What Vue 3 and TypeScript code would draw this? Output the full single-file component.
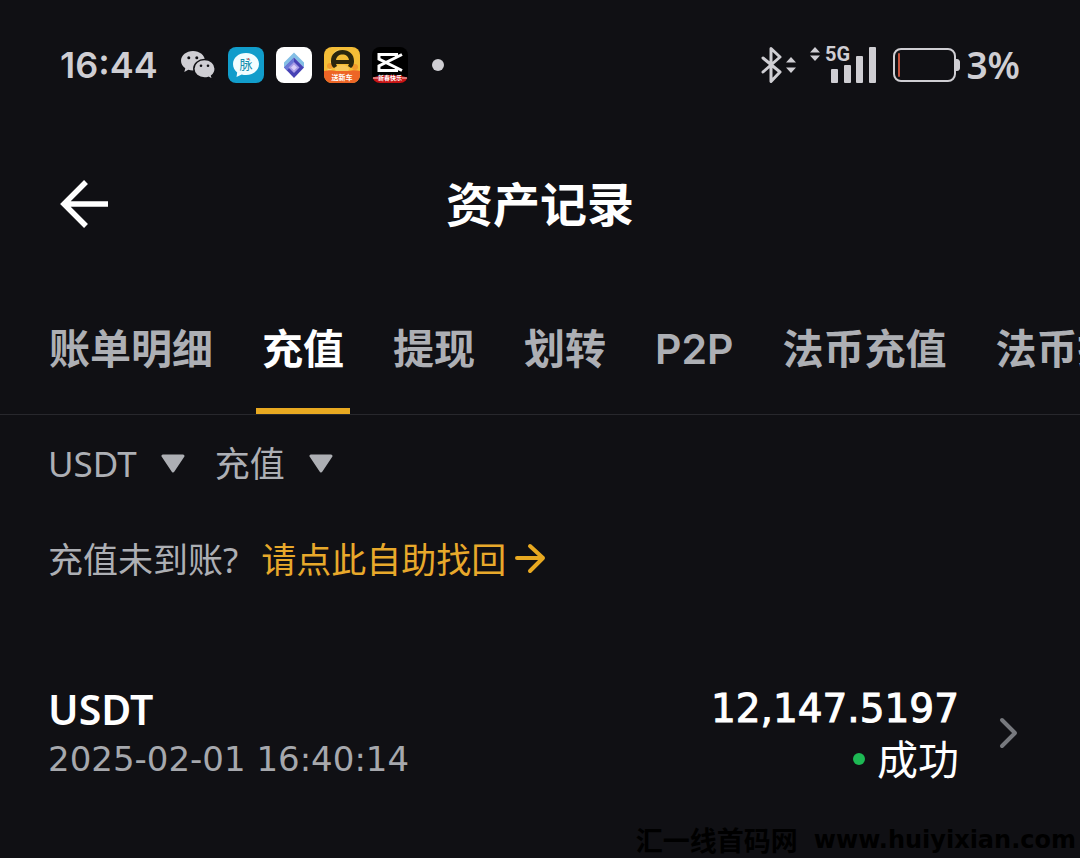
<script setup lang="ts">
import { ref } from 'vue'

interface DepositRecord {
  coin: string
  time: string
  amount: string
  status: string
}

const tabs: string[] = ['账单明细', '充值', '提现', '划转', 'P2P', '法币充值', '法币提现']
const activeTab = ref<string>('充值')
const coin = ref<string>('USDT')
const kind = ref<string>('充值')

const records: DepositRecord[] = [
  { coin: 'USDT', time: '2025-02-01 16:40:14', amount: '12,147.5197', status: '成功' },
]
</script>

<template>
  <div class="screen">
    <div class="status-bar">
      <span class="clock">16:44</span>
      <div class="notifications">
        <svg class="app-icon" viewBox="0 0 36 36" aria-hidden="true">
          <path fill="#cfced3" d="M13 4C6.400 4 1 8.300 1 13.800c0 3.100 1.700 5.700 4.300 7.500L4.300 25l4-2.200c1.500.5 3.100.8 4.700.8 6.600 0 12-4.300 12-9.800S19.600 4 13 4z" />
          <path fill="#cfced3" stroke="#101014" stroke-width="1.500" d="M24.500 12.600c-6 0-10.700 4-10.700 9.200s4.700 9.200 10.700 9.200c1.400 0 2.800-.2 4-.6l4.200 2.200-1.100-3.700c2.200-1.700 3.600-4.200 3.600-7.100 0-5.200-4.700-9.200-10.700-9.200z" />
          <g fill="#101014">
            <circle cx="8.800" cy="10.800" r="1.500" /><circle cx="16.800" cy="10.800" r="1.500" />
            <circle cx="21" cy="18.800" r="1.300" /><circle cx="28" cy="18.800" r="1.300" />
          </g>
        </svg>
        <svg class="app-icon" viewBox="0 0 36 36" aria-hidden="true">
          <rect width="36" height="36" rx="8" fill="#119dcb" />
          <path fill="#f2fdff" d="M18 6C10.500 6 5 10.800 5 17c0 3.500 1.600 6.500 4.200 8.500L8.500 30l5.200-2.500c1.400.4 2.800.5 4.300.5 7.500 0 13-4.800 13-11S25.500 6 18 6z" />
          <text x="18" y="22" text-anchor="middle" font-size="13" fill="#168fae">脉</text>
          <circle cx="20.500" cy="12" r="1" fill="#d8605a" />
        </svg>
        <svg class="app-icon" viewBox="0 0 36 36" aria-hidden="true">
          <rect width="36" height="36" rx="8" fill="#fff" />
          <path fill="#84bfe5" d="M18 5.500 28 15.500v5L18 10.500 8 20.500v-5z" />
          <path fill="#4742b5" d="M18 10.500 28 20.500 18 31 8 20.500z" />
          <path fill="#6a78d6" d="M18 10.500 8 20.500l3 3 7-8z" />
          <path fill="#a79be6" d="m18 15 5.500 5.500L18 26l-5.500-5.500z" />
          <path fill="#d9cff7" d="m18 17.500 3 3-3 3-3-3z" />
        </svg>
        <svg class="app-icon" viewBox="0 0 36 36" aria-hidden="true">
          <rect width="36" height="36" rx="8" fill="#f4bd37" />
          <path fill="#f8d568" d="M3 24 10 5l5-3-8 22z" />
          <circle cx="6" cy="19" r="3" fill="#f19a2b" /><circle cx="31" cy="20" r="3" fill="#f19a2b" />
          <ellipse cx="18" cy="22" rx="7" ry="4" fill="#f7c95a" />
          <path fill="#ed6526" d="M0 24c5-1 8-1 12 0h12c5-1 8-1 12 0v4a8 8 0 0 1-8 8H8a8 8 0 0 1-8-8z" />
          <path fill="#2a260e" d="M10 21C7 19 7 15 7 14 7 7 12 3 18.500 3S30 7 30 14c0 1 0 5-3 7l-3-2 1-2H12l1 2zM12 13h13c-.5-3.500-3-5.500-6.500-5.500S12.500 9.500 12 13z" fill-rule="evenodd" />
          <text x="18" y="33" text-anchor="middle" font-size="7" font-weight="700" fill="#fff">送新车</text>
        </svg>
        <svg class="app-icon" viewBox="0 0 36 36" aria-hidden="true">
          <defs><clipPath id="tile"><rect width="36" height="36" rx="8" /></clipPath></defs>
          <g clip-path="url(#tile)">
            <rect width="36" height="36" fill="#000" />
            <path fill="#c81516" d="M0 31c8-4 28-4 36 0v5H0z" />
            <path fill="none" stroke="#fff" stroke-width="3" d="M30 7.500 7 19v4.500h17.500V21M24.500 10V7.500H7V12l23 11.500" />
            <path stroke="#f5d6d0" stroke-width="1" d="M1 31h5M30 31h5" />
            <text x="18" y="33" text-anchor="middle" font-size="6" font-weight="700" fill="#fff">新春快乐</text>
          </g>
        </svg>
        <span class="more-dot"></span>
      </div>
      <div class="system">
        <svg class="bluetooth" viewBox="0 0 38 38" aria-hidden="true">
          <path fill="none" stroke="#cfced3" stroke-width="3" stroke-linejoin="round" stroke-linecap="round" d="m3 12 17 14-9 9.500v-33L20 11 3 26" />
          <path fill="#cfced3" d="m31 11 5 5.500H26zM31 27l5-5.500H26z" />
        </svg>
        <svg class="signal" viewBox="0 0 68 38" aria-hidden="true">
          <path fill="#cfced3" d="m5 1 5 5.500H0zM5 15l5-5.500H0z" />
          <text x="15" y="15" class="network">5G</text>
          <g fill="#cfced3">
            <rect x="21" y="23" width="7" height="14" rx="1" /><rect x="34" y="19" width="7" height="18" rx="1" />
            <rect x="46" y="10" width="7" height="27" rx="1" /><rect x="59" y="1" width="7" height="36" rx="1" />
          </g>
        </svg>
        <svg class="battery" viewBox="0 0 67 36" aria-hidden="true">
          <rect x="1" y="2" width="61" height="32" rx="7" fill="none" stroke="#cfced3" stroke-width="2" />
          <path fill="#cfced3" d="M62 12h2c2 0 3 2 3 3v6c0 1-1 3-3 3h-2z" />
          <rect x="5" y="6" width="2" height="24" rx="1" fill="#c4523d" />
        </svg>
        <span class="percent">3%</span>
      </div>
    </div>

    <header class="title-bar">
      <button class="back" type="button" aria-label="返回">
        <svg viewBox="0 0 50 50" aria-hidden="true">
          <path fill="none" stroke="#fff" stroke-width="5.500" d="M49 25H5M27 3 5 25l22 22" />
        </svg>
      </button>
      <h1>资产记录</h1>
    </header>

    <nav class="tabs" role="tablist">
      <button
        v-for="tab in tabs"
        :key="tab"
        type="button"
        role="tab"
        class="tab"
        :class="{ active: tab === activeTab }"
        :aria-selected="tab === activeTab"
        @click="activeTab = tab"
      >{{ tab }}</button>
    </nav>

    <main>
      <div class="filters">
        <label class="filter">
          <select v-model="coin" aria-label="币种">
            <option>USDT</option>
          </select>
          <svg viewBox="0 0 24 20" aria-hidden="true"><path d="M2 2h20L12 17z" /></svg>
        </label>
        <label class="filter">
          <select v-model="kind" aria-label="类型">
            <option>充值</option>
          </select>
          <svg viewBox="0 0 24 20" aria-hidden="true"><path d="M2 2h20L12 17z" /></svg>
        </label>
      </div>

      <p class="help">
        <span>充值未到账?</span>
        <a href="#recover">请点此自助找回<svg viewBox="0 0 30 30" aria-hidden="true">
          <path d="M2 13h26M15 1l13 12-13 13" />
        </svg></a>
      </p>

      <ul class="records">
        <li v-for="record in records" :key="record.time">
          <a class="record" href="#record">
            <span class="left">
              <strong class="coin">{{ record.coin }}</strong>
              <time class="time">{{ record.time }}</time>
            </span>
            <span class="right">
              <span class="amount">{{ record.amount }}</span>
              <span class="state">{{ record.status }}</span>
            </span>
            <svg class="chevron" viewBox="0 0 18 30" aria-hidden="true"><path d="m2 1 13 13L2 27" /></svg>
          </a>
        </li>
      </ul>
    </main>

    <div class="watermark"><span>汇一线首码网</span><span>www.huiyixian.com</span></div>
  </div>
</template>

<style>
body {
  background: #101014;
}
</style>

<style scoped>
.screen {
  position: relative;
  box-sizing: border-box;
  min-height: 100vh;
  overflow: hidden;
  background: #101014;
  color: #fff;
  font-family: 'Noto Sans', 'Noto Sans CJK SC', sans-serif;
}
svg {
  display: block;
  flex: none;
}
button,
select {
  margin: 0;
  padding: 0;
  border: 0;
  background: none;
  color: inherit;
  font: inherit;
}
a {
  color: inherit;
  text-decoration: none;
}
.status-bar {
  display: flex;
  align-items: center;
  height: 130px;
  padding: 0 60px;
  color: #cfced3;
}
.clock {
  font: 600 36px/48px Inter, sans-serif;
}
.percent {
  font: 600 37px/48px 'Noto Sans', sans-serif;
}
.notifications {
  display: flex;
  align-items: center;
  gap: 12px;
  margin-left: 22px;
}
.app-icon {
  width: 36px;
  height: 36px;
}
.more-dot {
  width: 12px;
  height: 12px;
  margin-left: 12px;
  border-radius: 50%;
  background: #cfced3;
}
.system {
  display: flex;
  align-items: center;
  margin-left: auto;
}
.bluetooth {
  width: 38px;
  height: 38px;
}
.signal {
  width: 68px;
  height: 38px;
  margin-left: 12px;
  overflow: visible;
}
.network {
  fill: #cfced3;
  font: 700 20px Roboto, sans-serif;
}
.battery {
  width: 67px;
  height: 36px;
  margin: 0 6px 0 15px;
}
.title-bar {
  display: grid;
  grid-template-columns: 50px 1fr 50px;
  align-items: center;
  height: 148px;
  padding: 0 59px;
}
.back svg {
  width: 50px;
  height: 50px;
}
h1 {
  margin: 0;
  padding-bottom: 4px;
  font: 700 47px/68px 'Noto Sans CJK SC', sans-serif;
  text-align: center;
}
.tabs {
  display: flex;
  gap: 37px;
  height: 136px;
  padding-left: 43px;
  overflow: hidden;
  border-bottom: 1px solid #28282d;
}
.tab {
  flex: none;
  box-sizing: border-box;
  height: 136px;
  padding: 12px 6px 0;
  border-bottom: 6px solid transparent;
  color: #adafb4;
  font: 600 41px/60px Inter, 'Noto Sans CJK SC', sans-serif;
  white-space: nowrap;
}
.tab.active {
  border-color: #e8a921;
  color: #fff;
}
.filters {
  display: flex;
  align-items: center;
  gap: 30px;
  height: 98px;
  padding: 0 48px;
  color: #adafb4;
}
.filter {
  display: flex;
  align-items: center;
  gap: 24px;
}
.filter select {
  appearance: none;
  field-sizing: content;
  font-size: 35px;
  line-height: 48px;
}
.filter svg {
  width: 24px;
  height: 20px;
}
.filter path {
  fill: #adafb4;
  stroke: #adafb4;
  stroke-width: 3;
  stroke-linejoin: round;
}
.help {
  display: flex;
  align-items: center;
  gap: 23px;
  height: 94px;
  margin: 0;
  padding: 0 48px;
  color: #adafb4;
  font-size: 35px;
  line-height: 48px;
}
.help a {
  display: flex;
  align-items: center;
  gap: 9px;
  color: #e8a92b;
}
.help svg {
  width: 30px;
  height: 30px;
  overflow: visible;
}
.help path {
  fill: none;
  stroke: #e8a921;
  stroke-width: 4;
  stroke-linecap: round;
  stroke-linejoin: round;
}
.records {
  margin: 0;
  padding: 77px 62px 72px 48px;
  list-style: none;
}
.record {
  display: flex;
  align-items: center;
}
.left,
.right {
  display: flex;
  flex-direction: column;
}
.right {
  align-items: flex-end;
  margin-left: auto;
}
.coin,
.amount,
.time,
.state {
  line-height: 50px;
}
.coin {
  font-size: 41px;
  font-weight: 600;
}
.time {
  color: #a6a8ad;
  font-family: 'DejaVu Sans', sans-serif;
  font-size: 34px;
}
.amount {
  font-family: 'DejaVu Sans', sans-serif;
  font-size: 39px;
  -webkit-text-stroke: 1px #fff;
}
.state {
  display: flex;
  align-items: center;
  gap: 12px;
  font-size: 41px;
}
.state::before {
  content: '';
  width: 12px;
  height: 12px;
  border-radius: 50%;
  background: #1db954;
}
.chevron {
  width: 18px;
  height: 30px;
  margin-left: 41px;
  overflow: visible;
}
.chevron path {
  fill: none;
  stroke: #77797e;
  stroke-width: 4;
  stroke-linecap: round;
  stroke-linejoin: round;
}
.watermark {
  position: absolute;
  right: 4px;
  bottom: 0;
  display: flex;
  align-items: center;
  gap: 16px;
  color: #000;
  font: 700 24px/36px 'DejaVu Sans', sans-serif;
}
.watermark span:first-child {
  font: 700 27px/36px 'Noto Sans CJK SC', sans-serif;
}
</style>
